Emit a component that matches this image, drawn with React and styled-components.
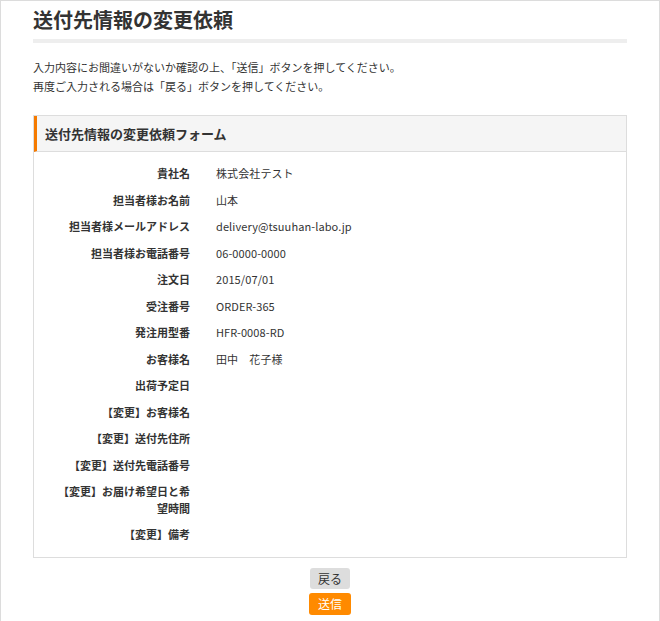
import React from "react";
import styled, { createGlobalStyle } from "styled-components";

const GlobalStyle = createGlobalStyle`
  html, body {
    margin: 0;
    padding: 0;
    background: #fff;
  }
  body {
    font-family: "Noto Sans CJK JP", "Noto Sans", sans-serif;
    color: #333;
  }
`;

const Frame = styled.div`
  box-sizing: border-box;
  min-height: 100vh;
  border: 1px solid #dcdcdc;
  padding: 0 32px 6px;
`;

const Title = styled.h1`
  margin: 0;
  padding: 4px 0 4px;
  font-size: 20px;
  line-height: 30px;
  font-weight: bold;
  color: #333;
  border-bottom: 4px solid #eeeeee;
`;

const Lead = styled.div`
  margin: 15px 0 19px;
  font-size: 11px;
  line-height: 19px;
`;

const FormBox = styled.section`
  border: 1px solid #dddddd;
`;

const FormHeader = styled.h2`
  margin: 0;
  padding: 0 0 0 8px;
  height: 35px;
  display: flex;
  align-items: center;
  background: #f5f5f5;
  border-left: 3px solid #f57a00;
  border-bottom: 1px solid #dddddd;
  font-size: 13px;
  font-weight: bold;
  color: #333;
`;

const Table = styled.table`
  width: 100%;
  border-collapse: collapse;
  margin: 8px 0 9px;
  font-size: 11px;
  line-height: 16.5px;
`;

const Label = styled.th`
  width: 136px;
  padding: 5px 26px 5px 20px;
  text-align: right;
  vertical-align: top;
  font-weight: bold;
  color: #333;
  word-break: break-all;
`;

const Value = styled.td`
  padding: 5px 0;
  vertical-align: top;
  color: #333;
  letter-spacing: 0.1px;
`;

const Buttons = styled.div`
  display: flex;
  flex-direction: column;
  align-items: center;
  gap: 4px;
  margin-top: 10px;
`;

const Button = styled.button`
  font-family: inherit;
  font-size: 12px;
  line-height: 16px;
  padding: 3px 8px 2px;
  border: none;
  border-radius: 3px;
  background: ${(p) => (p.$primary ? "#ff8a00" : "#dddddd")};
  color: ${(p) => (p.$primary ? "#fff" : "#333")};
  ${(p) => p.$primary && "padding: 3px 9px 3px;"}
  cursor: pointer;
`;

const rows = [
  ["貴社名", "株式会社テスト"],
  ["担当者様お名前", "山本"],
  ["担当者様メールアドレス", "delivery@tsuuhan-labo.jp"],
  ["担当者様お電話番号", "06-0000-0000"],
  ["注文日", "2015/07/01"],
  ["受注番号", "ORDER-365"],
  ["発注用型番", "HFR-0008-RD"],
  ["お客様名", "田中　花子様"],
  ["出荷予定日", ""],
  ["【変更】お客様名", ""],
  ["【変更】送付先住所", ""],
  ["【変更】送付先電話番号", ""],
  ["【変更】お届け希望日と希望時間", ""],
  ["【変更】備考", ""],
];

export default function App() {
  return (
    <>
      <GlobalStyle />
      <Frame>
        <Title>送付先情報の変更依頼</Title>
        <Lead>
          入力内容にお間違いがないか確認の上、「送信」ボタンを押してください。
          <br />
          再度ご入力される場合は「戻る」ボタンを押してください。
        </Lead>
        <FormBox>
          <FormHeader>送付先情報の変更依頼フォーム</FormHeader>
          <Table>
            <tbody>
              {rows.map(([label, value]) => (
                <tr key={label}>
                  <Label>{label}</Label>
                  <Value>{value}</Value>
                </tr>
              ))}
            </tbody>
          </Table>
        </FormBox>
        <Buttons>
          <Button type="button">戻る</Button>
          <Button type="button" $primary>送信</Button>
        </Buttons>
      </Frame>
    </>
  );
}
